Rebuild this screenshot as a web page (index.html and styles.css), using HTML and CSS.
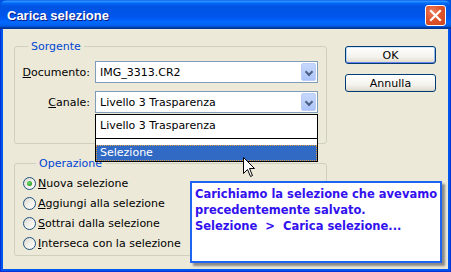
FILE: index.html
```html
<!DOCTYPE html>
<html lang="it">

<head>
    <meta charset="UTF-8">
    <title>Carica selezione</title>
    <link rel="stylesheet" href="styles.css">
</head>

<body>
    <div class="window">
        <div class="titlebar">
            <span class="title">Carica selezione</span>
            <span class="close-btn">
                <svg width="13" height="13" viewBox="0 0 13 13">
                    <path d="M2 2 L11 11 M11 2 L2 11" stroke="#fff" stroke-width="2.2" stroke-linecap="square" fill="none" />
                </svg>
            </span>
        </div>

        <div class="client">
            <div class="left-col">
                <fieldset class="group source">
                    <legend>Sorgente</legend>
                    <div class="field-row">
                        <label class="field-label"><u>D</u>ocumento:</label>
                        <div class="combo">
                            <span class="combo-text">IMG_3313.CR2</span>
                            <span class="combo-arrow"></span>
                        </div>
                    </div>
                    <div class="field-row">
                        <label class="field-label"><u>C</u>anale:</label>
                        <div class="combo">
                            <span class="combo-text">Livello 3 Trasparenza</span>
                            <span class="combo-arrow"></span>
                            <!-- lista aperta -->
                            <div class="combo-list">
                                <div class="list-item first">Livello 3 Trasparenza</div>
                                <div class="list-gap"></div>
                                <div class="list-item selected">Selezione</div>
                            </div>
                        </div>
                    </div>
                </fieldset>

                <fieldset class="group operation">
                    <legend>Operazione</legend>
                    <div class="radio-row"><span class="radio checked"></span><span><u>N</u>uova selezione</span></div>
                    <div class="radio-row"><span class="radio"></span><span><u>A</u>ggiungi alla selezione</span></div>
                    <div class="radio-row"><span class="radio"></span><span><u>S</u>ottrai dalla selezione</span></div>
                    <div class="radio-row"><span class="radio"></span><span><u>I</u>nterseca con la selezione</span></div>
                </fieldset>
            </div>

            <div class="right-col">
                <button class="btn default">OK</button>
                <button class="btn">Annulla</button>
            </div>

            <div class="note">Carichiamo la selezione che avevamo
precedentemente salvato.
Selezione  &gt;  Carica selezione...</div>

            <svg class="cursor" width="13" height="21" viewBox="0 0 13 21">
                <path d="M0.5 0.5 L0.5 16.5 L4.5 12.5 L7.5 19.5 L9.5 18.5 L6.5 11.5 L11.5 11.5 Z" fill="#fff" stroke="#000" stroke-width="1" />
            </svg>
        </div>
    </div>
</body>

</html>
```

FILE: styles.css
```css
* {
    margin: 0;
    padding: 0;
    box-sizing: border-box;
}

body {
    width: 451px;
    height: 272px;
    overflow: hidden;
    font-family: 'DejaVu Sans', sans-serif;
    font-size: 11px;
    color: #000;
    background: #0054e3;
}

.window {
    width: 451px;
    height: 272px;
    border-radius: 7px 7px 0 0;
    background: #0055ea;
    border: 1px solid #0831d9;
    border-top: none;
    display: flex;
    flex-direction: column;
}

.titlebar {
    height: 29px;
    margin: 0 -1px;
    border-radius: 7px 7px 0 0;
    background: linear-gradient(to bottom, #0058ee 0%, #3593ff 4%, #288eff 6%, #127dff 8%, #036ffc 10%, #0262ee 14%, #0057e5 20%, #0054e3 24%, #0055eb 56%, #005bf5 66%, #026afe 76%, #0062ef 86%, #0052d6 92%, #0040ab 94%, #003092 100%);
    display: flex;
    align-items: flex-start;
    justify-content: space-between;
    padding: 0 5px 0 7px;
}

.title {
    font-family: 'Liberation Sans', Arial, sans-serif;
    font-weight: bold;
    font-size: 13px;
    line-height: 26px;
    padding-top: 3px;
    color: #fff;
    text-shadow: 1px 1px 0 #0a1883;
}

.close-btn {
    width: 21px;
    height: 21px;
    margin-top: 5px;
    border: 1px solid #fff;
    border-radius: 3px;
    background: radial-gradient(circle at 35% 30%, #ee8060 0%, #e0532b 45%, #cc4520 100%);
    display: flex;
    align-items: center;
    justify-content: center;
}

.client {
    position: relative;
    flex: 1;
    margin: 0 2px 2px 2px;
    background: #ece9d8;
    display: flex;
    padding: 11px 12px 0 11px;
}

.left-col {
    width: 313px;
}

.group {
    border: 1px solid #d0d0bf;
    border-radius: 3px;
    min-width: 0;
}

.group legend {
    margin-left: 13px;
    padding: 0 3px;
    color: #0046d5;
    line-height: 13px;
}

.source {
    padding: 8px 7px 30px 0;
}

.field-row {
    display: flex;
    align-items: center;
    gap: 5px;
}

.field-row + .field-row {
    margin-top: 8px;
}

.field-label {
    width: 75px;
    text-align: right;
}

.combo {
    position: relative;
    width: 223px;
    height: 22px;
    border: 1px solid #7f9db9;
    background: #fff;
    display: flex;
    align-items: center;
    padding-left: 4px;
}

.combo-text {
    flex: 1;
}

.combo-arrow {
    width: 15px;
    height: 18px;
    margin-right: 1px;
    border: 1px solid #bccdf6;
    border-radius: 2px;
    background: linear-gradient(to bottom, #c6d7fd 0%, #b8cdfa 60%, #aac3f8 100%);
    position: relative;
}

.combo-arrow::after {
    content: '';
    position: absolute;
    left: 4px;
    top: 5px;
    width: 4px;
    height: 4px;
    border-right: 2px solid #4d6185;
    border-bottom: 2px solid #4d6185;
    transform: rotate(45deg);
}

.combo-list {
    position: absolute;
    left: -1px;
    top: 22px;
    width: 223px;
    border: 1px solid #000;
    background: #fff;
    z-index: 2;
}

.list-item {
    padding-left: 4px;
    height: 16px;
    line-height: 16px;
}

.list-item.first {
    height: 24px;
    line-height: 22px;
    border-bottom: 1px solid #000;
}

.list-gap {
    height: 6px;
}

.list-item.selected {
    background: #316ac5;
    color: #fff;
    outline: 1px dotted #e0a040;
    outline-offset: -1px;
}

.operation {
    margin-top: 13px;
    padding: 3px 0 2px 8px;
}

.radio-row {
    height: 20px;
    display: flex;
    align-items: center;
    gap: 2px;
}

.radio {
    width: 13px;
    height: 13px;
    border: 1px solid #1c5180;
    border-radius: 50%;
    background: linear-gradient(135deg, #dcdad0 0%, #f4f3ee 60%, #fff 100%);
    position: relative;
}

.radio.checked::after {
    content: '';
    position: absolute;
    left: 3px;
    top: 3px;
    width: 5px;
    height: 5px;
    border-radius: 50%;
    background: radial-gradient(circle at 40% 40%, #7ed77e 0%, #21a121 70%, #1a8a1a 100%);
}

.right-col {
    margin-left: 18px;
    padding-top: 6px;
    display: flex;
    flex-direction: column;
    gap: 10px;
}

.btn {
    width: 91px;
    height: 18px;
    font-family: 'DejaVu Sans', sans-serif;
    font-size: 11px;
    color: #000;
    border: 1px solid #003c74;
    border-radius: 3px;
    background: linear-gradient(to bottom, #fff 0%, #f4f3ee 60%, #e3e0d4 90%, #d6d0c5 100%);
}

.btn.default {
    box-shadow: inset 0 1px 0 #cee7ff, inset 0 -1px 0 #6982ee, inset 1px 0 0 #b8d6fb, inset -1px 0 0 #95b8f3;
}

.note {
    position: absolute;
    left: 187px;
    top: 152px;
    width: 252px;
    height: 82px;
    background: #fff;
    border: 2px solid #1e64f0;
    box-shadow: 3px 3px 2px #8a8a8a;
    padding: 3px 0 0 3px;
    white-space: pre;
    font-weight: bold;
    font-size: 11.5px;
    line-height: 16px;
    color: #3311ee;
    z-index: 3;
}

.cursor {
    position: absolute;
    left: 240px;
    top: 128px;
    z-index: 4;
}
```
